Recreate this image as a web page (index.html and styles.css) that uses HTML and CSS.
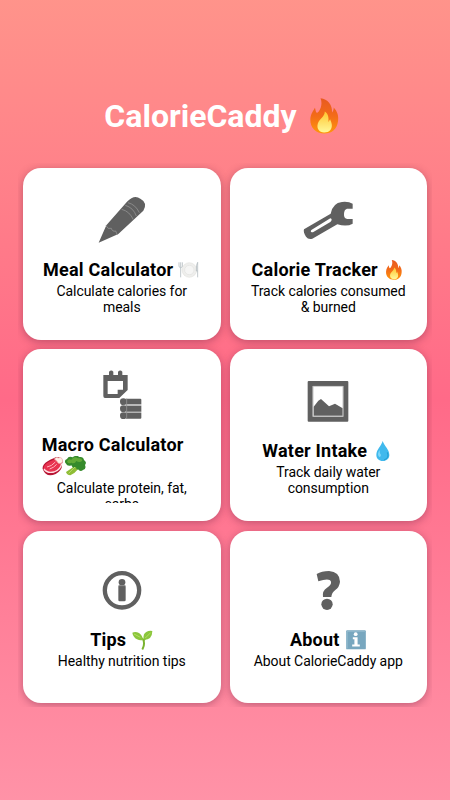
FILE: index.html
```html
<!DOCTYPE html>
<html lang="en">
<head>
<meta charset="utf-8">
<title>CalorieCaddy</title>
<link rel="stylesheet" href="styles.css">
</head>
<body>
<svg class="defs" aria-hidden="true">
  <defs>
    <linearGradient id="flame" x1="0" y1="0" x2="0" y2="1"><stop offset="0" stop-color="#e85a20"/><stop offset=".5" stop-color="#f36b18"/><stop offset="1" stop-color="#ff970b"/></linearGradient>
    <linearGradient id="core" x1="0" y1="0" x2="0" y2="1"><stop offset="0" stop-color="#ffc52d"/><stop offset="1" stop-color="#fff89a"/></linearGradient>
    <symbol id="fire" viewBox="0 0 88 108">
      <path fill="url(#flame)" d="M32 0C54 3 68 19 67 43C71 39 72 33 72 28C82 39 88 52 85 70C82 94 67 107 43 107C18 107 0 90 1 64C2 47 11 37 15 29C17 33 16 40 21 45C29 41 40 20 32 0Z"/>
      <path fill="url(#core)" d="M45 40C44 57 29 61 24 76C19 92 28 104 43 104C59 104 68 94 66 79C65 72 62 68 61 64C58 68 58 70 56 72C57 58 56 48 45 40Z"/>
    </symbol>
  </defs>
</svg>
<main class="screen">
  <h1 class="brand"><span class="brand-name">CalorieCaddy</span><svg class="brand-fire"><use href="#fire"/></svg></h1>
  <section class="grid">
    <article class="card">
      <div class="content">
        <svg class="icon" viewBox="254 96 162 162">
          <path d="M265 245L288 193L350 122Q372 99 390 113Q413 125 399 149L324 219Z"/>
          <g class="lines"><path d="M287 194Q292 206 303 202Q306 213 316 210L321 222M334 145Q358 151 369 176M345 133Q369 140 378 165M353 125Q376 131 387 155"/></g>
        </svg>
        <h2 class="title"><span>Meal Calculator</span>
          <svg class="emoji" viewBox="504 300 66 60"><circle cx="538" cy="330" r="22" fill="#eeeeec" stroke="#dededb" stroke-width="1.5"/><circle cx="538" cy="330" r="14" fill="#f5f5f4" stroke="#dcdcda" stroke-width="1.5"/><path d="M507 307V320Q512 327 517 320V307M512 307V352M563 352V307Q558 313 559 333H563" fill="none" stroke="#b5bdc1" stroke-width="2.5"/></svg></h2>
        <p class="desc">Calculate calories for<br>meals</p>
      </div>
    </article>
    <article class="card">
      <div class="content">
        <svg class="icon" viewBox="229 96 162 162">
          <path fill-rule="evenodd" d="M238 205L318 158Q324 126 352 123Q372 121 384 128V143H367Q358 146 358 159Q357 172 368 174H384V188Q367 198 338 190L263 233Q251 237 244 227Q235 214 238 205ZM260 207Q255 214 265 214L317 183Q325 175 317 172Z"/>
        </svg>
        <h2 class="title"><span>Calorie Tracker</span>
          <svg class="emoji" viewBox="-11 0 110 108"><use href="#fire" width="88" height="108"/></svg></h2>
        <p class="desc">Track calories consumed<br>&amp; burned</p>
      </div>
    </article>
    <article class="card">
      <div class="content">
        <svg class="icon" viewBox="254 66 162 162">
          <path fill-rule="evenodd" d="M279 90H296V80Q303 73 309 80V90H323V80Q330 73 336 80V90H352V135L327 159H284Q279 159 279 153ZM292 108V147H322V134H338V108Z"/>
          <circle cx="339" cy="170" r="10"/><circle cx="339" cy="191" r="10"/><circle cx="339" cy="212" r="10"/>
          <path d="M346 161H390Q393 161 393 164V178H346ZM346 182H393V200H346ZM346 204H393V218Q393 221 390 221H346Z"/>
          <path class="lines" d="M349 161V221M339 180H393M339 202H393"/>
        </svg>
        <h2 class="title wrap"><span>Macro Calculator</span><br><span class="pair">
          <svg class="emoji" viewBox="96 334 66 60"><path fill="#b71534" d="M98 373Q96 360 113 350Q122 344 131 341Q142 333 151 340Q162 347 156 357Q158 377 137 388Q109 401 98 373Z"/><path fill="#e83350" d="M101 371Q101 360 116 352L135 344Q154 341 154 361Q151 376 133 383Q109 391 101 371Z"/><path fill="none" stroke="#ffe1e5" stroke-width="4" d="M102 373Q112 387 132 382Q153 374 155 356"/><path fill="none" stroke="#ffb4bd" stroke-width="3" d="M111 367Q125 365 136 352M119 373Q132 369 140 359"/><path fill="#fff0e8" stroke="#ecaaa6" stroke-width="2" d="M133 343Q140 335 145 340Q155 336 157 345Q161 353 152 356Q144 359 141 350Z"/></svg><svg class="emoji" viewBox="165 334 66 60"><path fill="#8fbd36" d="M198 355L187 369L168 382Q170 391 181 392Q194 387 204 374L220 369V354Z"/><path fill="#368b2c" d="M167 356Q161 347 171 343Q176 332 188 338Q199 329 208 337Q220 335 222 346Q232 353 225 361Q230 373 219 376Q211 383 204 374Q198 376 198 367Q188 373 184 362Q173 367 167 356Z"/><path fill="#62aa37" d="M171 351Q174 340 184 345Q193 333 204 341Q216 339 217 348Q209 355 199 349Q194 359 184 354Q176 359 171 351Z"/><path fill="none" stroke="#b6d86a" stroke-width="3" d="M176 386L195 367"/></svg></span></h2>
        <p class="desc">Calculate protein, fat,<br>carbs</p>
      </div>
    </article>
    <article class="card">
      <div class="content">
        <svg class="icon" viewBox="229 85 162 162">
          <path fill-rule="evenodd" d="M252 106H368Q371 106 371 109V225Q371 228 368 228H252Q249 228 249 225V109Q249 106 252 106ZM264 121V213H356V121Z"/>
          <path d="M267 183L281 165L289 160L313 182L331 174L354 188V210H267Z"/>
          <path class="frame" d="M265 122H355V212H265Z"/>
        </svg>
        <h2 class="title"><span>Water Intake</span>
          <svg class="emoji" viewBox="442 288 66 60"><path fill="#40b9ed" d="M474 288C470 303 455 313 455 330C455 341 463 348 474 348C486 348 494 341 494 330C494 313 479 303 474 288Z"/><path fill="#80d8fa" d="M465 315Q457 326 462 334Q467 339 469 330Q464 326 465 315Z"/><path fill="none" stroke="#219bd0" stroke-width="3" d="M488 322Q495 339 478 345"/></svg></h2>
        <p class="desc">Track daily water<br>consumption</p>
      </div>
    </article>
    <article class="card">
      <div class="content">
        <svg class="icon" viewBox="254 114 162 162">
          <circle class="ring" cx="335" cy="196" r="51.5"/><circle cx="335" cy="172" r="10"/><rect x="324" y="181" width="22" height="48" rx="4"/><path class="lines" d="M325 182H345"/>
        </svg>
        <h2 class="title"><span>Tips</span>
          <svg class="emoji" viewBox="362 316 66 60"><path fill="none" stroke="#7ab32e" stroke-width="6" stroke-linecap="round" d="M397 372Q404 359 399 345L384 336M401 346Q408 332 417 327"/><path fill="#8bc63c" d="M398 345Q391 349 380 344Q368 337 366 324Q375 319 386 325Q396 331 398 345ZM400 345Q397 326 409 321Q417 317 426 319Q426 333 419 340Q410 347 400 345Z"/><path fill="none" stroke="#b4dd61" stroke-width="3" d="M371 328L390 338M405 340L421 324"/></svg></h2>
        <p class="desc">Healthy nutrition tips</p>
      </div>
    </article>
    <article class="card">
      <div class="content">
        <svg class="icon" viewBox="229 114 162 162">
          <path d="M276 147Q291 138 313 138Q345 140 346 170Q344 187 332 195Q321 203 320 216H295Q292 197 307 188Q321 179 319 170Q315 158 281 169Z"/><circle cx="307" cy="238" r="17"/>
        </svg>
        <h2 class="title"><span>About</span>
          <svg class="emoji" viewBox="359 315 66 63"><rect x="361" y="316" width="62" height="60" rx="3" fill="#78a7bf"/><path fill="none" stroke="#a3c7d8" stroke-width="2" d="M364 373V319H420"/><path fill="#fff" d="M382 338H397V361H404V367H380V361H387V344H382Z"/><circle cx="391" cy="328" r="6" fill="#fff"/></svg></h2>
        <p class="desc">About CalorieCaddy app</p>
      </div>
    </article>
  </section>
</main>
</body>
</html>
```

FILE: styles.css
```css
* { box-sizing: border-box; }
body {
  margin: 0;
  font-family: Roboto, sans-serif;
  color: #000;
}
.defs { position: absolute; width: 0; height: 0; }
.screen {
  height: 800px;
  padding: 92px 18px 0;
  background: linear-gradient(#ff9a8b -8%, #ff6a88 50%, #ff99ac 108%);
  overflow: hidden;
}
.brand {
  display: flex;
  align-items: center;
  justify-content: center;
  gap: 13px;
  height: 48px;
  margin: 0 0 23px;
  color: #fff;
  font-size: 32px;
  line-height: 48px;
  font-weight: 700;
}
.brand-fire { width: 29px; height: 36px; margin-right: 7px; }
.grid {
  display: grid;
  grid-template-columns: 197.5px 197.5px;
  grid-auto-rows: 172px;
  gap: 9.25px 9px;
  width: 414px;
  height: 544px;
  padding: 5px;
  overflow: hidden;
}
.card {
  padding: 18px;
  background: #fff;
  border-radius: 18px;
  box-shadow: 0 2px 8px rgba(80, 20, 50, .36);
}
.content {
  display: flex;
  flex-direction: column;
  align-items: center;
  justify-content: safe center;
  height: 136px;
  overflow: hidden;
}
.icon {
  flex: none;
  width: 54px;
  height: 54px;
  fill: #606060;
}
.lines { fill: none; stroke: #929292; stroke-width: 2.5; }
.frame { fill: none; stroke: #aaa; stroke-width: 2; }
.ring { fill: none; stroke: #606060; stroke-width: 13; }
.title {
  display: flex;
  flex: none;
  align-items: center;
  justify-content: center;
  gap: 5px;
  height: 22px;
  margin: 12px 0 2px;
  font-size: 18px;
  line-height: 22px;
  font-weight: 700;
  letter-spacing: .22px;
  white-space: nowrap;
}
.emoji { flex: none; width: 22px; height: 20px; }
.wrap { display: block; width: 160px; height: 44px; margin-top: 13px; }
.pair { display: flex; gap: 1px; }
.desc {
  flex: none;
  margin: 0;
  padding-bottom: 1px;
  font-size: 14px;
  line-height: 16px;
  letter-spacing: -.06px;
  text-align: center;
  white-space: nowrap;
}
```
